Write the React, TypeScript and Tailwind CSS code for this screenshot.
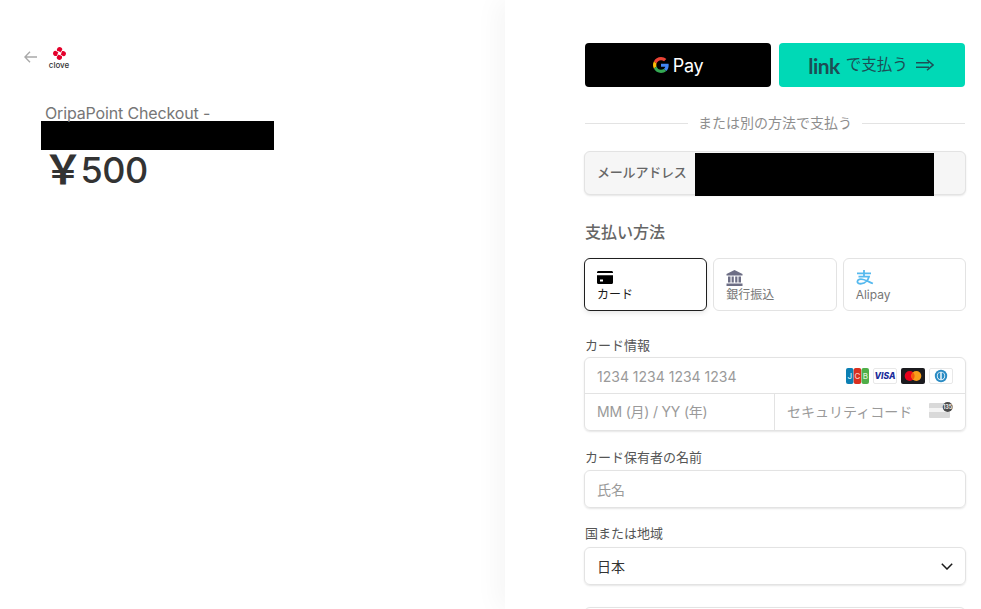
import React from "react";

function GLogo() {
  return (
    <svg width="16" height="16" viewBox="0 0 48 48" aria-hidden="true">
      <path fill="#EA4335" d="M24 9.500c3.500 0 6.700 1.200 9.200 3.600l6.900-6.900C35.900 2.400 30.400 0 24 0 14.600 0 6.500 5.400 2.600 13.200l8 6.200C12.400 13.600 17.700 9.500 24 9.500z" />
      <path fill="#4285F4" d="M47 24.500c0-1.600-.1-3.100-.4-4.500H24v9h12.900c-.6 3-2.200 5.500-4.700 7.200l7.700 6C44.400 38 47 31.800 47 24.500z" />
      <path fill="#FBBC05" d="M10.600 28.600c-.5-1.400-.7-3-.7-4.600s.3-3.200.7-4.600l-8-6.200C.9 16.500 0 20.100 0 24s.9 7.500 2.600 10.800l8-6.200z" />
      <path fill="#34A853" d="M24 48c6.500 0 11.900-2.100 15.900-5.800l-7.700-6c-2.200 1.500-4.900 2.300-8.200 2.300-6.300 0-11.600-4.100-13.400-9.900l-8 6.200C6.500 42.600 14.600 48 24 48z" />
    </svg>
  );
}

function CloveLogo() {
  return (
    <div className="flex flex-col items-center w-[20px]">
      <svg width="13" height="13" viewBox="0 0 13 13" aria-hidden="true">
        <path fill="#e4002b" d="M6.500 0 C8 0 9.300 1.100 9.300 2.300 C9.300 3.500 8.200 4.300 7.300 5.400 C6.800 4.300 5.200 4.800 4.300 4 C3.300 3 4.300 0 6.500 0 Z" />
        <path fill="#e4002b" d="M13 6.500 C13 8 11.900 9.300 10.700 9.300 C9.500 9.300 8.700 8.200 7.600 7.300 C8.700 6.800 8.200 5.200 9 4.300 C10 3.300 13 4.300 13 6.500 Z" />
        <path fill="#e4002b" d="M6.500 13 C5 13 3.700 11.900 3.700 10.700 C3.700 9.500 4.800 8.700 5.700 7.600 C6.200 8.700 7.800 8.200 8.700 9 C9.700 10 8.700 13 6.500 13 Z" />
        <path fill="#e4002b" d="M0 6.500 C0 5 1.100 3.700 2.300 3.700 C3.500 3.700 4.300 4.800 5.400 5.700 C4.300 6.200 4.800 7.800 4 8.700 C3 9.700 0 8.700 0 6.500 Z" />
      </svg>
      <span className="text-[8px] leading-[8px] font-medium text-[#333] mt-[1px]">clove</span>
    </div>
  );
}

function CardGlyph() {
  return (
    <svg width="16" height="13" viewBox="0 0 16 13" aria-hidden="true">
      <path fill="#000" d="M0 1.500C0 .7.600 0 1.400 0h13.200C15.400 0 16 .7 16 1.500V2H0zM0 4.300h16v7.200c0 .8-.6 1.500-1.400 1.500H1.400C.6 13 0 12.300 0 11.500z" />
      <rect x="3" y="8.500" width="3" height="2" fill="#fff" />
    </svg>
  );
}

function BankGlyph() {
  return (
    <svg width="17" height="16" viewBox="0 0 17 16" aria-hidden="true">
      <path fill="#6d6e85" d="M8.500 0 L16.500 4 V5.500 H.5 V4 Z M2 6.500h2.500v6H2z M5.600 6.500h2.200v6H5.600z M9.200 6.500h2.200v6H9.200z M12.500 6.500H15v6h-2.500z M.5 13.500h16V16H.5z" />
    </svg>
  );
}

function AlipayGlyph() {
  return (
    <svg width="18" height="15" viewBox="0 0 18 15" fill="none" stroke="#56b9ee" strokeWidth="1.800" aria-hidden="true">
      <path d="M1 3.300h14M8 0v6.500M2.500 6.700h10.500c-.8 3-3.600 6.500-7.600 7-2.800.3-4.200-1-4-2.400.3-2 3-2.800 6-1.800 3 .9 5.500 2.300 9.500 4" />
    </svg>
  );
}

function JcbIcon() {
  return (
    <svg width="23" height="16" viewBox="0 0 23 16" aria-hidden="true">
      <rect x="0" y="0" width="7.500" height="16" rx="2" fill="#0b7fb3" />
      <rect x="7.700" y="0" width="7.500" height="16" rx="2" fill="#d9301f" />
      <rect x="15.500" y="0" width="7.500" height="16" rx="2" fill="#4fae48" />
      <text x="3.800" y="11" fontSize="8" fontWeight="500" fill="#d5eef8" textAnchor="middle">J</text>
      <text x="11.500" y="11" fontSize="8" fontWeight="500" fill="#f5c9c2" textAnchor="middle">C</text>
      <text x="19.300" y="11" fontSize="8" fontWeight="500" fill="#d8f0d5" textAnchor="middle">B</text>
    </svg>
  );
}

function VisaIcon() {
  return (
    <svg width="24" height="16" viewBox="0 0 24 16" aria-hidden="true">
      <rect x=".5" y=".5" width="23" height="15" rx="1.500" fill="#fff" stroke="#e8e8e8" />
      <text x="12" y="11" fontSize="8.500" fontWeight="800" fontStyle="italic" fill="#1a2c9a" textAnchor="middle">VISA</text>
    </svg>
  );
}

function McIcon() {
  return (
    <svg width="24" height="16" viewBox="0 0 24 16" aria-hidden="true">
      <rect width="24" height="16" rx="2" fill="#1b1b1f" />
      <circle cx="8.700" cy="8" r="5" fill="#e8001c" />
      <circle cx="15.300" cy="8" r="5" fill="#f79e1b" />
      <path d="M12 4.300a5 5 0 0 1 0 7.400 5 5 0 0 1 0-7.400z" fill="#f4580c" />
    </svg>
  );
}

function DinersIcon() {
  return (
    <svg width="24" height="16" viewBox="0 0 24 16" aria-hidden="true">
      <rect x=".5" y=".5" width="23" height="15" rx="1.500" fill="#fff" stroke="#e8e8e8" />
      <circle cx="12" cy="8" r="6.200" fill="#2b8cc4" />
      <circle cx="12" cy="8" r="4.200" fill="#fff" />
      <path d="M11.300 4.200a4 4 0 0 0 0 7.600zM12.700 4.200a4 4 0 0 1 0 7.600z" fill="#2b8cc4" />
    </svg>
  );
}

function CvcIcon() {
  return (
    <svg width="24" height="16" viewBox="0 0 24 16" className="-mt-[2px]" aria-hidden="true">
      <rect x="0" y="1" width="21" height="15" rx="1" fill="#d9d9d9" />
      <rect x="0" y="6" width="21" height="4" fill="#f4f4f4" />
      <circle cx="18.700" cy="5" r="5" fill="#4a4a4a" />
      <text x="18.700" y="7" fontSize="5.500" fontWeight="600" fill="#fff" textAnchor="middle">135</text>
    </svg>
  );
}

function Tab({ icon, label, active }: { icon: React.ReactNode; label: string; active?: boolean }) {
  return (
    <div
      className={
        active
          ? "flex-1 h-[53px] rounded-[6px] border border-[#1f1f1f] px-3 pt-[10px] bg-white shadow-[0_2px_5px_rgba(0,0,0,0.1)]"
          : "flex-1 h-[53px] rounded-[6px] border border-[#e3e3e3] px-3 pt-[10px] bg-white"
      }
    >
      <div className="h-[17px] flex items-center">{icon}</div>
      <div className={active ? "text-[12px] leading-[16px] mt-px text-[#1a1a1a]" : "text-[12px] leading-[16px] mt-px text-[#767676]"}>{label}</div>
    </div>
  );
}

export default function App() {
  const inputShadow = "shadow-[0_1px_2px_rgba(0,0,0,0.1)]";
  return (
    <div
      className="flex h-screen w-full overflow-hidden bg-white"
      style={{ fontFamily: 'Inter, "Noto Sans CJK JP", sans-serif' }}
    >
      <div className="w-[505px] shrink-0 pt-[47px]">
        <div className="flex items-start pl-[24px]">
          <svg width="13" height="12" viewBox="0 0 13 12" className="mt-[4px]" fill="none" stroke="#a9a9a9" strokeWidth="1.400" aria-hidden="true">
            <path d="M13 6H1M6 .8 .9 6 6 11.200" />
          </svg>
          <div className="ml-[12px]">
            <CloveLogo />
          </div>
        </div>
        <div className="pl-[45px] mt-[34px] text-[16px] leading-[20px] tracking-[-0.15px] text-[#767676]">OripaPoint Checkout -</div>
        <div className="ml-[41px] w-[233px] h-[29px] bg-black -mt-[2px]" />
        <div className="pl-[43px] flex items-center h-[40px] text-[36px] leading-[40px] font-medium tracking-[-0.5px] text-[#333]">
          <span className="text-[40px] leading-[40px] font-semibold">￥</span>
          <span className="-ml-[2px]">500</span>
        </div>
      </div>

      <div className="flex-1 pl-[80px] pr-[16px] pt-[43px] shadow-[-8px_0_24px_rgba(0,0,0,0.04)]">
        <div className="flex gap-2">
          <div className="flex-1 h-[44px] rounded-[4px] bg-black flex items-center justify-center gap-[4px] text-white text-[18px] tracking-[-0.3px]">
            <GLogo />
            <span>Pay</span>
          </div>
          <div className="flex-1 h-[44px] rounded-[4px] bg-[#00d9b6] flex items-center justify-center text-[#1d4e55]">
            <span className="text-[21px] leading-none font-bold tracking-[-0.5px] -ml-[2px]" style={{ fontFamily: 'Lato, sans-serif' }}>link</span>
            <span className="text-[15.5px] ml-[6px]">で支払う</span>
            <svg width="18" height="12" viewBox="0 0 18 12" className="ml-[8px]" fill="none" stroke="#1d4e55" strokeWidth="1.500" aria-hidden="true">
              <path d="M0 3.800h13M0 8.200h13M11 .8 17 6l-6 5.200" />
            </svg>
          </div>
        </div>

        <div className="flex items-center mt-[26px] h-[20px] gap-[10px]">
          <div className="flex-1 h-px bg-[#e3e3e3]" />
          <span className="text-[14px] text-[#8e8e8e] leading-[20px]">または別の方法で支払う</span>
          <div className="flex-1 h-px bg-[#e3e3e3]" />
        </div>

        <div className={`relative -mx-px mt-[18px] h-[44px] rounded-[6px] border border-[#e3e3e3] bg-[#f6f6f6] flex items-center pl-3 ${inputShadow}`}>
          <span className="text-[13px] tracking-[-0.2px] font-medium text-[#666]">メールアドレス</span>
          <div className="absolute left-[110px] top-px w-[239px] h-[43px] bg-black" />
        </div>

        <div className="mt-[27px] text-[16px] leading-[20px] font-medium text-[#666]">支払い方法</div>

        <div className="flex gap-[6px] -mx-px mt-[16px]">
          <Tab icon={<CardGlyph />} label="カード" active />
          <Tab icon={<BankGlyph />} label="銀行振込" />
          <Tab icon={<AlipayGlyph />} label="Alipay" />
        </div>

        <div className="mt-[26px] text-[13px] leading-[16px] text-[#555]">カード情報</div>
        <div className={`-mx-px mt-[4px] rounded-[6px] border border-[#e3e3e3] ${inputShadow}`}>
          <div className="h-[36px] flex items-center justify-between pl-3 pr-3 border-b border-[#e3e3e3]">
            <span className="text-[14px] text-[#9a9a9a] pt-[2px]">1234 1234 1234 1234</span>
            <div className="flex items-center gap-[4px]">
              <JcbIcon />
              <VisaIcon />
              <McIcon />
              <DinersIcon />
            </div>
          </div>
          <div className="h-[36px] flex">
            <div className="w-[190px] border-r border-[#e3e3e3] pl-3 pb-[2px] flex items-center text-[14px] tracking-[-0.2px] text-[#9a9a9a]">MM (月) / YY (年)</div>
            <div className="flex-1 pl-3 pr-3 pb-[2px] flex items-center justify-between text-[14px] text-[#9a9a9a]">
              <span>セキュリティコード</span>
              <CvcIcon />
            </div>
          </div>
        </div>

        <div className="mt-[18px] text-[13px] leading-[16px] text-[#555]">カード保有者の名前</div>
        <div className={`-mx-px mt-[5px] h-[38px] rounded-[6px] border border-[#e3e3e3] flex items-center pl-3 text-[14px] text-[#9a9a9a] ${inputShadow}`}>氏名</div>

        <div className="mt-[17px] text-[13px] leading-[16px] text-[#555]">国または地域</div>
        <div className={`-mx-px mt-[6px] h-[38px] rounded-[6px] border border-[#e3e3e3] flex items-center justify-between pl-3 pr-3 text-[14px] text-[#333] ${inputShadow}`}>
          <span>日本</span>
          <svg width="12" height="7" viewBox="0 0 12 7" fill="none" stroke="#1a1a1a" strokeWidth="1.500" aria-hidden="true">
            <path d="M.8.8 6 6 11.200.8" />
          </svg>
        </div>

        <div className={`-mx-px mt-[22px] h-[38px] rounded-[6px] border border-[#e3e3e3] ${inputShadow}`} />
      </div>
    </div>
  );
}
